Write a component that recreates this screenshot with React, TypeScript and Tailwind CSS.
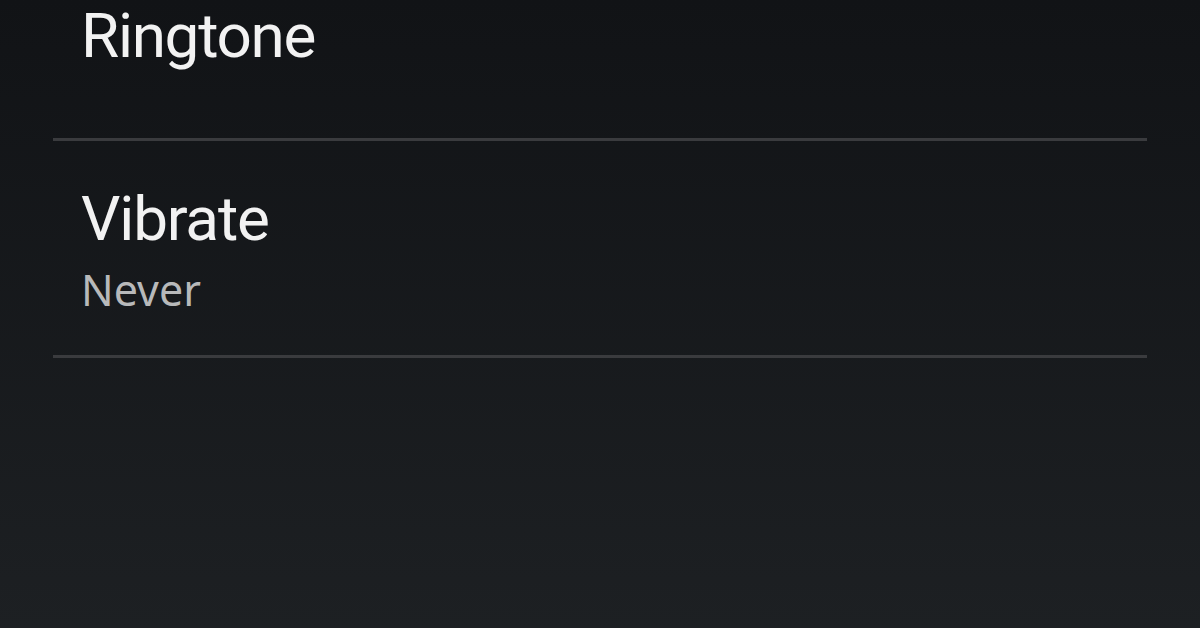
export default function App() {
  return (
    <div className="h-[628px] w-[1200px] overflow-hidden bg-gradient-to-b from-[#111316] to-[#1d2023] font-['Roboto','Noto_Sans',sans-serif]">
      <div className="mx-[53px] mt-[-73px] flex flex-col">
        <div className="flex h-[214px] items-center border-b-[3px] border-[#3a3b3e] px-[28px] pt-[6px]">
          <span className="text-[62px] leading-none tracking-[-1.3px] text-[#f2f2f2]">Ringtone</span>
        </div>
        <div className="flex h-[217px] flex-col border-b-[3px] border-[#3a3b3e] px-[28px] pt-[45px]">
          <span className="text-[62px] leading-[66px] tracking-[-1.2px] text-[#f2f2f2]">Vibrate</span>
          <span className="mt-[5px] font-['Noto_Sans','Open_Sans',sans-serif] text-[43px] leading-[66px] text-[#b8b9ba]">
            Never
          </span>
        </div>
      </div>
    </div>
  );
}
